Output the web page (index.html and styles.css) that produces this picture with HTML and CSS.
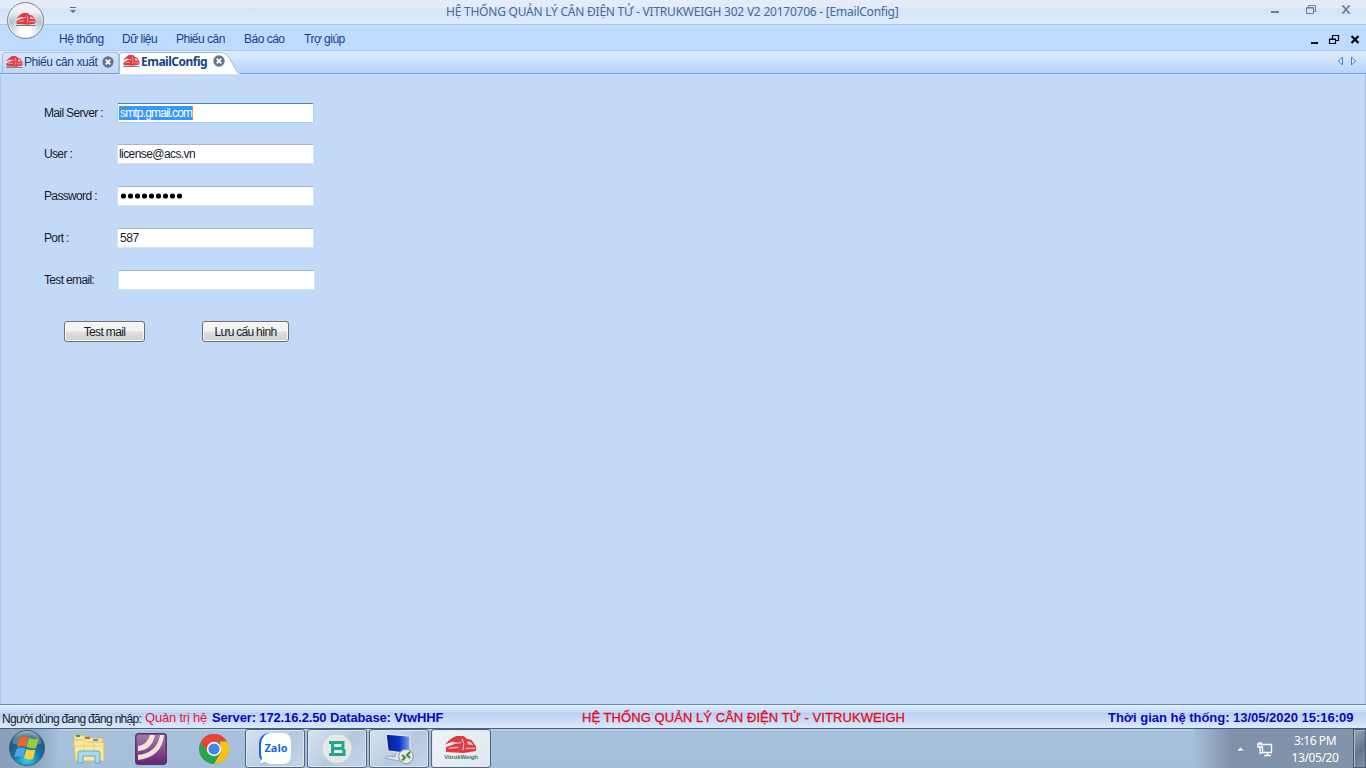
FILE: index.html
```html
<!DOCTYPE html>
<html lang="vi">
<head>
<meta charset="utf-8">
<title>EmailConfig</title>
<link rel="stylesheet" href="styles.css">
</head>
<body>
<svg class="defs" width="0" height="0" aria-hidden="true">
  <symbol id="truck" viewBox="0 0 34 20" preserveAspectRatio="none">
    <path fill="#e23a45" d="M0 9Q6 2 12 0H20L23 3 28 4 33 11V16L20 18 1 17V12L8 9 13 7 8 6Z"/>
    <path stroke="#f6e3e8" stroke-width="1" fill="none" d="M0 11 10 8 17 7M18 3 20 8 19 15M4 13 14 12M22 13l10 0"/>
    <path fill="#f0cdd3" d="M24 5.500 27 6 30 9.500 24 9z"/>
    <path fill="#5c8574" d="M0 18.500h33V20H0z"/>
  </symbol>
  <symbol id="close" viewBox="0 0 12 12">
    <circle cx="6" cy="6" r="5.7" fill="#65748c"/>
    <path d="M3.7 3.7 8.3 8.3M8.3 3.7 3.7 8.3" stroke="#fff" stroke-width="1.8"/>
  </symbol>
</svg>
<div class="screen">
  <header class="titlebar">
    <svg class="quick" width="6" height="7" viewBox="0 0 6 7"><path d="M0 .5h6" stroke="#536f96"/><path d="M0 3h6L3 6z" fill="#536f96"/></svg>
    <span class="title">HỆ THỐNG QUẢN LÝ CÂN ĐIỆN TỬ - VITRUKWEIGH 302 V2 20170706 - [EmailConfig]</span>
    <svg class="winctl" width="84" height="14" viewBox="0 0 84 14" fill="none" stroke="#6d7e96">
      <path d="M1 8h8" stroke-width="2"/>
      <path d="M36.500 3.500h7v6h-7zM38.500 3v-1.500h7v6H44M36 4h8"/>
      <path d="m73 2 6 7M79 2l-6 7" stroke-width="1.800"/><path d="M71.500 2h3M77.500 2h3M71.500 9h3M77.500 9h3"/>
    </svg>
  </header>
  <div class="orb"><svg width="20" height="13"><use href="#truck"/></svg></div>
  <nav class="menu">
    <span class="m1">Hệ thống</span><span class="m2">Dữ liệu</span><span class="m3">Phiếu cân</span><span class="m4">Báo cáo</span><span class="m5">Trợ giúp</span>
    <svg class="mdictl" width="50" height="12" viewBox="0 0 50 12" fill="none" stroke="#050a18">
      <path d="M1 10h7" stroke-width="2"/>
      <path d="M19.500 6.500h6v4h-6zM22.500 6V2.500h6v5H26M19 6h7M22 2.500h7" stroke-width="1.200"/>
      <path d="m41.500 3 7 7M48.500 3l-7 7" stroke-width="2.200"/>
    </svg>
  </nav>
  <div class="tabs">
    <div class="tab"><svg width="17" height="12"><use href="#truck"/></svg><span>Phiếu cân xuất</span><svg class="x" width="12" height="12"><use href="#close"/></svg></div>
    <div class="tab active">
      <svg class="shape" width="121" height="22" viewBox="0 0 121 22"><path d="M.5 22V3Q.5.500 3 .500H102Q107 .500 111 7L117 18Q119 21.500 121 22" fill="#fff" stroke="#9fbce2"/><path d="M1 21.500h118" stroke="#fff"/></svg>
      <svg width="17" height="12"><use href="#truck"/></svg><span>EmailConfig</span><svg class="x" width="12" height="12"><use href="#close"/></svg>
    </div>
    <svg class="arrows" width="20" height="10" viewBox="0 0 20 10" fill="#d9ecff" stroke="#3d7fc8"><path d="M5.500 1v8L1.500 5zM14.500 1v8L18.500 5z"/></svg>
  </div>
  <main class="content">
    <form class="form">
      <label><span>Mail Server :</span><span class="field focus"><mark>smtp.gmail.com</mark></span></label>
      <label><span>User :</span><span class="field user">license@acs.vn</span></label>
      <label><span>Password :</span><span class="field"><svg width="64" height="8" viewBox="0 0 64 8"><g fill="#000"><circle cx="3.500" cy="4" r="2.600"/><circle cx="10.500" cy="4" r="2.600"/><circle cx="17.500" cy="4" r="2.600"/><circle cx="24.500" cy="4" r="2.600"/><circle cx="31.500" cy="4" r="2.600"/><circle cx="38.500" cy="4" r="2.600"/><circle cx="45.500" cy="4" r="2.600"/><circle cx="52.500" cy="4" r="2.600"/><circle cx="59.500" cy="4" r="2.600"/></g></svg></span></label>
      <label><span>Port :</span><span class="field port">587</span></label>
      <label class="last"><span>Test email:</span><span class="field"></span></label>
      <div class="buttons"><button type="button" class="test">Test mail</button><button type="button" class="save">Lưu cấu hình</button></div>
    </form>
  </main>
  <footer class="status">
    <span class="login">Người dùng đang đăng nhập:</span><span class="role">Quản trị hệ</span><span class="server">Server: 172.16.2.50 Database: VtwHHF</span>
    <span class="system">HỆ THỐNG QUẢN LÝ CÂN ĐIỆN TỬ - VITRUKWEIGH</span>
    <span class="time">Thời gian hệ thống: 13/05/2020 15:16:09</span>
  </footer>
  <div class="taskbar">
    <div class="start">
      <svg width="38" height="38" viewBox="0 0 38 38">
        <defs><radialGradient id="sg" cx=".5" cy=".85" r=".85"><stop offset="0" stop-color="#35d0f0"/><stop offset=".45" stop-color="#1273a9"/><stop offset=".8" stop-color="#285170"/><stop offset="1" stop-color="#8fb0c6"/></radialGradient></defs>
        <circle cx="19" cy="19" r="17.500" fill="url(#sg)" stroke="#41617b"/>
        <path d="M4 14Q9 2 19 2T34 14Q19 21 4 14" fill="#b9d4df" opacity=".35"/>
        <path d="M11.500 9q4.500-2.500 8.500-.5L17.700 18q-4-2-8.700.4z" fill="#ef6528"/><path d="M21 9q4 2.500 9.500.6L28 19q-5 1.200-9.300-1z" fill="#9dca3c"/>
        <path d="M8.500 20q4.500-2.500 8.800-.5L15 28.500q-4-2.500-8.700-.2z" fill="#4ca6e8"/><path d="M18.500 20q4.500 2 9 .8L25 30q-4.500 1.300-9-1z" fill="#fbd034"/>
      </svg>
    </div>
    <div class="icon explorer">
      <svg width="34" height="32" viewBox="0 0 34 32">
        <path d="M2 5V2h9l2 2h8v1h10v5H2z" fill="#f6e7a0" stroke="#cbb562"/><path d="M4 3h4" stroke="#43a04a" stroke-width="2"/><path d="M13 5h5" stroke="#d4623c" stroke-width="2"/><path d="M21 7h5" stroke="#4a9cdb" stroke-width="2"/>
        <path d="M1.500 7h11l2 2H32v19H3.500z" fill="#f8e9a2" stroke="#d7bd62"/><path d="M3 13h28M12 9v12M22 10v11" stroke="#e5cf77"/>
        <path d="M6 30V20q0-2 2-2h18q2 0 2 2v10h-5v-7H11v7z" fill="#a9d9f1" stroke="#62a7cd"/>
      </svg>
    </div>
    <div class="icon">
      <svg width="32" height="32" viewBox="0 0 32 32"><defs><linearGradient id="pg" x2="0" y2="1"><stop stop-color="#a77bb2"/><stop offset="1" stop-color="#642773"/></linearGradient></defs>
        <rect x=".8" y=".8" width="30.400" height="30.400" rx="3" fill="url(#pg)" stroke="#5e3269" stroke-width="1.500"/>
        <path d="M3 13Q12 12 15 2h5Q17 17 3 18zM3 22Q22 20 25 2h4Q27 24 3 27z" fill="#f3e5d4"/></svg>
    </div>
    <div class="icon">
      <svg width="30" height="30" viewBox="0 0 30 30"><circle cx="15" cy="15" r="15" fill="#2ba24c"/><path d="M15 15 2 7.500A15 15 0 0 1 28 7.500H15z" fill="#ea4335"/><path d="M28 7.500A15 15 0 0 1 15 30l7-12-1-10.500z" fill="#fbc116"/><path d="M2 7.500 8.500 18.500 15 8z" fill="#ea4335"/><circle cx="15" cy="15" r="7.200" fill="#fff"/><circle cx="15" cy="15" r="5.600" fill="#4285e8"/></svg>
    </div>
    <div class="app zalo">
      <svg width="34" height="34" viewBox="0 0 34 34"><rect x="1" y="1" width="30" height="31" rx="10" fill="#1464e8"/><path d="M12 1h12q9 0 9 9v13q0 9-9 9H12q-4 0-6-2-2 1-4 1 2-3 2-5-1-2-1-5V12Q4 2 12 1" fill="#fff"/><text x="18" y="20" text-anchor="middle" textLength="23" lengthAdjust="spacingAndGlyphs" class="zalotext">Zalo</text></svg>
    </div>
    <div class="app">
      <svg width="32" height="32" viewBox="0 0 32 32"><circle cx="16" cy="15.500" r="15" fill="#e6e8e7" stroke="#c7d0d3"/><path d="M8 9.500H22V14L20.500 15.500 23 17V21.500H8M11.500 9V22M11 15.500H21" stroke="#20a887" stroke-width="3" fill="none"/></svg>
    </div>
    <div class="app">
      <svg width="34" height="32" viewBox="0 0 34 32"><defs><linearGradient id="mg"><stop stop-color="#0a1f92"/><stop offset=".55" stop-color="#0b31cb"/><stop offset="1" stop-color="#7da9f4"/></linearGradient></defs><path d="m4 1 24 2v18L6 18z" fill="url(#mg)" stroke="#dbe2ee" stroke-width="1.300"/><path d="m14 20-1 4-7-1-3 2 14 3 2-7" fill="#e1e5ee" stroke="#9fa9bb"/><circle cx="24" cy="23.500" r="7.300" fill="#e7e8e7" stroke="#88918d"/><path d="m20 22 3 2.500-3 3M28 19l-3 3 3 3" fill="none" stroke="#3f8d38" stroke-width="2"/></svg>
    </div>
    <div class="app logo">
      <svg width="32" height="17" viewBox="0 0 34 18" preserveAspectRatio="none"><svg width="34" height="20"><use href="#truck"/></svg></svg>
      <span class="logotext">VitrukWeigh</span>
    </div>
    <div class="tray">
      <svg class="up" width="9" height="6" viewBox="0 0 9 6"><path d="M.5 5 4.500 1l4 4z" fill="#fff" stroke="#596a7b" stroke-width=".5"/></svg>
      <svg class="net" width="17" height="16" viewBox="0 0 17 16" fill="none" stroke="#fff" stroke-width="1.300"><path d="M6 3.500h8.500v8H5.500V6M7 14.500h7M10.500 12v2M1 3h4v3H1zM2 1v2M4 1v2M3 6v6h2"/></svg>
      <div class="clock"><span>3:16 PM</span><span>13/05/20</span></div>
      <div class="desktop"></div>
    </div>
  </div>
</div>
</body>
</html>
```
FILE: styles.css
```css
* { box-sizing: border-box; }
body { margin: 0; overflow: hidden; font: 12px "Liberation Sans", Arial, sans-serif; color: #151b2b; }
.defs { position: absolute; }
svg { display: block; flex: none; }
span { white-space: pre; }
.screen { position: relative; width: 1366px; height: 768px; display: flex; flex-direction: column; background: #c3d9f8; }
.titlebar { height: 25px; display: flex; align-items: flex-start; border-bottom: 1px solid #a9c7ef; background: linear-gradient(#e3ecf8 0 8px, #d3e2f6 9px, #e0edfc 24px); }
.quick { margin: 7px 0 0 70px; }
.title { margin: 3px 0 0 370px; width: 454px; font: 12px/18px "Noto Sans", sans-serif; letter-spacing: -.23px; color: #46699e; }
.winctl { margin: 4px 0 0 370px; }
.orb { position: absolute; z-index: 2; left: 7px; top: 2px; width: 37px; height: 37px; border: 1.500px solid #7b8795; border-radius: 50%; display: flex; align-items: center; justify-content: center; padding-bottom: 2px; background: radial-gradient(ellipse at 50% 95%, #fff 0 18%, transparent 60%), linear-gradient(#eef2f6 0 25%, #b8c2cf 52%, #dce4ed); box-shadow: inset 0 0 0 1px #e9eff6; }
.menu { height: 26px; display: flex; align-items: center; padding: 3px 0 0 59px; background: #bfdbff; border-bottom: 1px solid #adc9ee; color: #15428b; letter-spacing: -.5px; }
.m1 { width: 63px; } .m2 { width: 54px; } .m3 { width: 68px; } .m4 { width: 60px; } .m5 { width: 50px; }
.mdictl { margin: 0 6px 0 auto; }
.tabs { height: 23px; display: flex; align-items: stretch; border-bottom: 1px solid #779fd3; background: linear-gradient(#dfedff, #b5d3fb); color: #15428b; }
.tab { position: relative; display: flex; align-items: center; width: 117px; margin: 1px 0 0 2px; padding: 0 0 3px 3px; border: 1px solid #a7c0e2; border-bottom: 0; border-radius: 3px 3px 0 0; background: linear-gradient(#d5e5fa, #c1d7f4); letter-spacing: -.42px; }
.tab span { margin-left: 1px; width: 78px; }
.tab.active { width: 121px; margin-left: 0; margin-bottom: -1px; padding: 0 0 4px 4px; border: 0; background: none; font: bold 12px "Noto Sans", sans-serif; letter-spacing: -.5px; }
.tab.active > :not(.shape) { position: relative; }
.tab.active > .shape { position: absolute; left: 0; top: 0; }
.tab.active span { width: 72px; }
.arrows { margin: 5px 9px 0 auto; }
.content { height: 630px; padding: 28px 0 0 44px; border-left: 1px solid #acc8ee; border-right: 1px solid #a9bfdf; border-top: 1px solid #d2e2fa; }
.form { margin-left: -1px; width: 272px; letter-spacing: -.65px; }
label { display: flex; height: 42px; align-items: flex-start; line-height: 19px; }
label > span:first-child { width: 73px; padding-top: 1px; }
label:first-child { height: 41px; }
.field { display: flex; align-items: center; width: 197px; height: 20px; padding-left: 2px; border: 1px solid #d7e4f5; border-top-color: #a9b5c5; border-radius: 2px; background: #fff; }
.field.focus { border-color: #a9cdec; border-top-color: #4b7fae; padding-left: 1px; }
.field.user { letter-spacing: -.58px; padding-left: 1px; }
.field.port { letter-spacing: -.4px; }
mark { height: 14px; line-height: 15px; padding-left: 1px; color: #fff; background: #3797fa; border-right: 1px solid #d0864a; letter-spacing: -.84px; }
.last .field { margin-left: 1px; }
.buttons { display: flex; gap: 57px; padding: 9px 0 0 20px; }
button { height: 21px; padding: 0; border: 1px solid #707070; border-radius: 3px; background: linear-gradient(#f4f4f4 0 48%, #dedede 52%, #d1d1d1); box-shadow: inset 0 0 0 1px #fafafa; font: 12px "Liberation Sans", Arial, sans-serif; letter-spacing: -.75px; color: #151b2b; }
.test { width: 81px; letter-spacing: -.65px; } .save { width: 87px; }
.status { height: 25px; display: flex; padding-left: 2px; line-height: 27px; border-top: 1px solid #5e8bc4; border-bottom: 1px solid #465c79; background: linear-gradient(#dceaff, #cce0fc 6px, #b9d1f2 8px, #dbe9fc); font-size: 13px; box-shadow: inset 0 1px #f0f7ff; }
.login { width: 143px; padding-top: 1px; font-size: 12px; letter-spacing: -.7px; }
.role { width: 67px; color: #ee1239; letter-spacing: -.2px; line-height: 25px; }
.server, .time { color: #0909bb; font-weight: bold; line-height: 26px; letter-spacing: -.14px; }
.time { letter-spacing: -.02px; }
.server { width: 370px; }
.system { width: 526px; color: #e40b20; letter-spacing: .06px; line-height: 26px; -webkit-text-stroke: .3px #e40b20; }
.taskbar { height: 39px; display: flex; background: linear-gradient(#c6d9ea 0, #a8c1dc 2px, #a5bfda); }
.start { width: 58px; padding-left: 8px; background: linear-gradient(90deg, #889fb8, #8da5bf 35px, #a5bfda); }
.icon { width: 62px; display: flex; align-items: center; justify-content: center; }
.app { width: 60px; margin-right: 2px; display: flex; align-items: center; justify-content: center; border: 1px solid #51657d; border-radius: 3px; background: linear-gradient(135deg, #d6e2ee, #bccfe2 48%, #b3c8de 50%, #c4d5e6); box-shadow: inset 0 0 0 1px #dbe7f2; }
.app.logo { flex-direction: column; background: linear-gradient(135deg, #f0f4f8, #dee6ee); }
.start + .icon + .icon + .icon { width: 63px; }
.zalotext { font: bold 11px "Open Sans", sans-serif; fill: #1265e6; }
.logotext { font: bold 6px/9px "Liberation Sans", sans-serif; letter-spacing: -.1px; color: #39765c; }
.tray { width: 172px; margin-left: auto; display: flex; align-items: center; color: #fff; background: linear-gradient(90deg, #a5bfda, #7e91a8 38px, #8195ac); }
.up { margin-left: 42px; }
.net { margin: 0 0 0 12px; }
.clock { display: flex; flex-direction: column; align-items: center; width: 84px; margin-left: 3px; font: 12px/17px "Noto Sans", sans-serif; letter-spacing: -.4px; }
.desktop { margin-left: auto; width: 14px; height: 39px; border: 1px solid #4b5d72; box-shadow: inset 1px 1px #acbac8; background: linear-gradient(135deg, #95a5b6, #61768e 55%, #8294a8); }
```
